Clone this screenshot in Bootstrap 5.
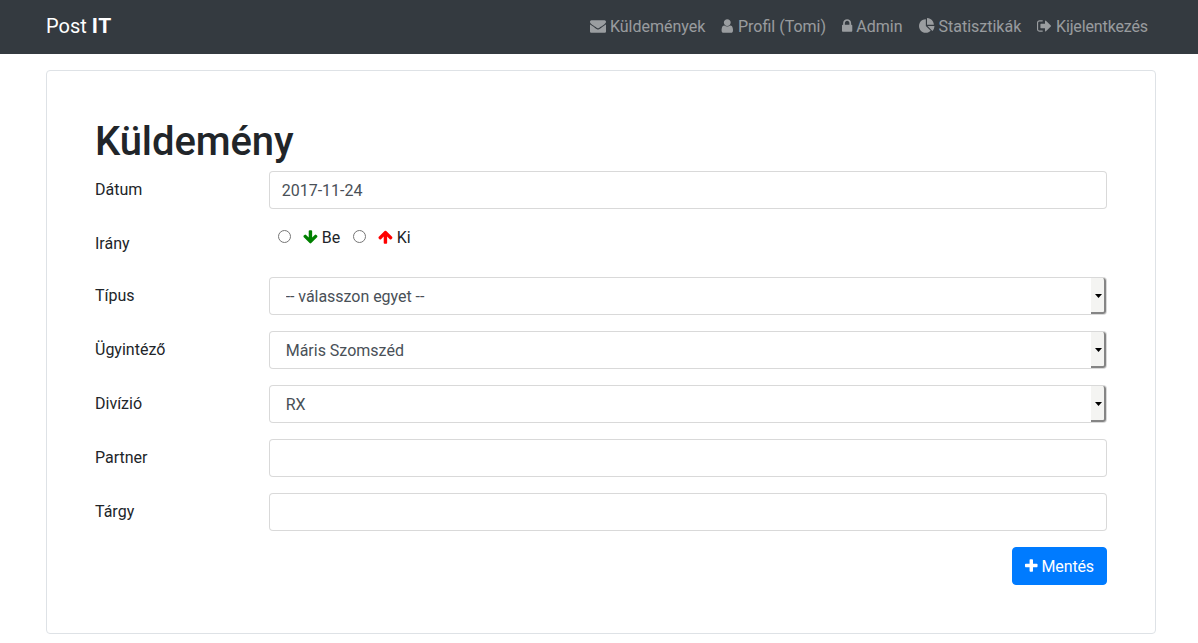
<!DOCTYPE html>
<html lang="hu">
<head>
<meta charset="utf-8">
<meta name="viewport" content="width=device-width, initial-scale=1">
<title>Post IT</title>
<link rel="stylesheet" href="https://cdn.jsdelivr.net/npm/bootstrap@5.3.0/dist/css/bootstrap.min.css">
<style>
body{font-family:Roboto,"Liberation Sans",sans-serif;color:#212529;overflow:hidden}
.page-width{width:1110px;margin-left:46px}
.topbar{background:#343a40;height:54px;padding:0}
.topbar .navbar-brand{font-size:20px;line-height:30px;padding:0;margin-top:-2px}
.topbar .navbar-brand b{font-size:21px;letter-spacing:.6px}
.topbar .nav-link{color:rgba(255,255,255,.5);line-height:24px;white-space:nowrap}
.topbar .logout{letter-spacing:-.13px}
.fa-icon{height:16px;fill:currentColor;vertical-align:-2.3px;overflow:visible}
.form-panel{border-color:rgba(0,0,0,.15);border-radius:4px}
h1{font-size:40px;line-height:42px;padding-top:2px;letter-spacing:-.1px}
.form-row{--bs-gutter-x:30px}
.col-form-label{padding-top:7px;padding-bottom:5px}
.form-control{border-color:rgba(0,0,0,.15);border-radius:4px;color:#495057;height:38px}
select.form-control{padding:7px 16px 5px}
#type{letter-spacing:-.04px}
.drop-button{right:1px;top:1px;width:15px;height:36px;padding-left:2px;padding-top:2px;background:#f4f4f2;border-right:2px solid #858585;border-bottom:2px solid #858585;border-radius:0 3px 3px 0;pointer-events:none}
.drop-button svg{width:7px;height:4px}
.choices{padding-left:9px}
.choices input{width:13px;height:13px;margin:5px 12px 0 0}
.choices label{line-height:24px;padding-top:1px;margin-right:12.4px;word-spacing:.3px}
.choices .fa-icon{vertical-align:-2px}
.btn-save{background:#007bff;border-color:#007bff;border-radius:4px;color:#fff;padding:7px 12px 5px;letter-spacing:-.13px}
</style>
</head>
<body>
<nav class="navbar topbar">
  <div class="page-width d-flex align-items-center justify-content-between">
    <a class="navbar-brand text-white" href="#">Post <b>IT</b></a>
    <ul class="nav flex-nowrap">
      <li><a class="nav-link p-2" href="#"><svg class="fa-icon" width="16" viewBox="0 0 1792 1792"><path d="M1792 710v794q0 66-47 113t-113 47h-1472q-66 0-113-47t-47-113v-794q44 49 101 87 362 246 497 345 57 42 92.500 65.500t94.500 48 110 24.500h2q51 0 110-24.500t94.500-48 92.500-65.500q170-123 498-345 57-39 100-87zm0-294q0 79-49 151t-122 123q-376 261-468 325-10 7-42.500 31t-54 38.500-52 32.500-57.500 27-50 9h-2q-23 0-50-9t-57.500-27-52-32.500-54-38.500-42.500-31q-91-64-262-182.500t-205-142.500q-62-42-117-115.500t-55-136.500q0-78 41.500-130t118.500-52h1472q65 0 112.500 47t47.500 113z"/></svg> Küldemények</a></li>
      <li><a class="nav-link p-2" href="#"><svg class="fa-icon" width="12.57" viewBox="192 0 1408 1792"><path d="M1536 1399q0 109-62.500 187t-150.500 78h-854q-88 0-150.500-78t-62.500-187q0-85 8.500-160.500t31.500-152 58.500-131 94-89 134.500-34.500q131 128 313 128t313-128q76 0 134.500 34.500t94 89 58.500 131 31.500 152 8.500 160.500zm-256-887q0 159-112.500 271.500t-271.500 112.500-271.500-112.500-112.500-271.500 112.500-271.500 271.500-112.500 271.500 112.500 112.500 271.500z"/></svg> Profil (Tomi)</a></li>
      <li><a class="nav-link p-2" href="#"><svg class="fa-icon" width="10.29" viewBox="320 0 1152 1792"><path d="M640 768h512v-192q0-106-75-181t-181-75-181 75-75 181v192zm832 96v576q0 40-28 68t-68 28h-960q-40 0-68-28t-28-68v-576q0-40 28-68t68-28h32v-192q0-184 132-316t316-132 316 132 132 316v192h32q40 0 68 28t28 68z"/></svg> Admin</a></li>
      <li><a class="nav-link p-2" href="#"><svg class="fa-icon" width="16" viewBox="0 0 1792 1792"><path d="M768 890l546 546q-106 108-247.500 168t-298.500 60q-209 0-385.500-103t-279.500-279.500-103-385.500 103-385.500 279.500-279.500 385.500-103v762zm187 6h773q0 157-60 298.500t-168 247.500zm709-128h-768v-768q209 0 385.500 103t279.500 279.500 103 385.500z"/></svg> Statisztikák</a></li>
      <li><a class="nav-link logout p-2" href="#"><svg class="fa-icon" width="14.86" viewBox="64 0 1664 1792"><path d="M704 1440q0 4 1 20t.5 26.500-3 23.500-10 19.500-20.500 6.500h-320q-119 0-203.500-84.500t-84.500-203.500v-704q0-119 84.500-203.500t203.500-84.500h320q13 0 22.500 9.500t9.500 22.500q0 4 1 20t.5 26.500-3 23.500-10 19.500-20.500 6.500h-320q-66 0-113 47t-47 113v704q0 66 47 113t113 47h312l11.500 1 11.500 3 8 5.500 7 9 2 13.500zm928-544q0 26-19 45l-544 544q-19 19-45 19t-45-19-19-45v-288h-448q-26 0-45-19t-19-45v-384q0-26 19-45t45-19h448v-288q0-26 19-45t45-19 45 19l544 544q19 19 19 45z"/></svg> Kijelentkezés</a></li>
    </ul>
  </div>
</nav>
<main class="page-width border form-panel mt-3 p-5">
  <h1 class="mb-2">Küldemény</h1>
  <form>
    <div class="row form-row mb-3">
      <label class="col-2 col-form-label" for="date">Dátum</label>
      <div class="col-10"><input class="form-control" id="date" type="text" value="2017-11-24"></div>
    </div>
    <div class="row form-row mb-3">
      <div class="col-2 col-form-label">Irány</div>
      <div class="col-10"><div class="choices d-flex align-items-start">
        <input type="radio" name="direction" id="in"><label for="in"><svg class="fa-icon" width="14.86" viewBox="64 0 1664 1792" style="color:green"><path d="M1675 832q0 53-37 90l-651 652q-39 37-91 37-53 0-90-37l-651-652q-38-36-38-90 0-53 38-91l74-75q39-37 91-37 53 0 90 37l294 294v-704q0-52 38-90t90-38h128q52 0 90 38t38 90v704l294-294q37-37 90-37 52 0 91 37l75 75q37 39 37 91z"/></svg> Be</label>
        <input type="radio" name="direction" id="out"><label for="out"><svg class="fa-icon" width="14.86" viewBox="64 0 1664 1792" style="color:red"><path d="M1675 971q0 51-37 90l-75 75q-38 38-91 38-54 0-90-38l-294-293v704q0 52-37.500 84.500t-90.500 32.500h-128q-53 0-90.500-32.500t-37.500-84.500v-704l-294 293q-36 38-90 38t-90-38l-75-75q-38-38-38-90 0-53 38-91l651-651q35-37 90-37 54 0 91 37l651 651q37 39 37 91z"/></svg> Ki</label>
      </div></div>
    </div>
    <div class="row form-row mb-3">
      <label class="col-2 col-form-label" for="type">Típus</label>
      <div class="col-10"><div class="position-relative">
        <select class="form-control" id="type"><option>-- válasszon egyet --</option></select>
        <span class="drop-button position-absolute d-flex align-items-center justify-content-center"><svg viewBox="0 0 7 4"><path d="M0 0h7L3.500 4z"/></svg></span>
      </div></div>
    </div>
    <div class="row form-row mb-3">
      <label class="col-2 col-form-label" for="clerk">Ügyintéző</label>
      <div class="col-10"><div class="position-relative">
        <select class="form-control" id="clerk"><option>Máris Szomszéd</option></select>
        <span class="drop-button position-absolute d-flex align-items-center justify-content-center"><svg viewBox="0 0 7 4"><path d="M0 0h7L3.500 4z"/></svg></span>
      </div></div>
    </div>
    <div class="row form-row mb-3">
      <label class="col-2 col-form-label" for="division">Divízió</label>
      <div class="col-10"><div class="position-relative">
        <select class="form-control" id="division"><option>RX</option></select>
        <span class="drop-button position-absolute d-flex align-items-center justify-content-center"><svg viewBox="0 0 7 4"><path d="M0 0h7L3.500 4z"/></svg></span>
      </div></div>
    </div>
    <div class="row form-row mb-3">
      <label class="col-2 col-form-label" for="partner">Partner</label>
      <div class="col-10"><input class="form-control" id="partner" type="text"></div>
    </div>
    <div class="row form-row mb-3">
      <label class="col-2 col-form-label" for="subject">Tárgy</label>
      <div class="col-10"><input class="form-control" id="subject" type="text"></div>
    </div>
    <div class="d-flex justify-content-end">
      <button class="btn btn-save" type="button"><svg class="fa-icon" width="12.57" viewBox="192 0 1408 1792"><path d="M1600 736v192q0 40-28 68t-68 28h-416v416q0 40-28 68t-68 28h-192q-40 0-68-28t-28-68v-416h-416q-40 0-68-28t-28-68v-192q0-40 28-68t68-28h416v-416q0-40 28-68t68-28h192q40 0 68 28t28 68v416h416q40 0 68 28t28 68z"/></svg> Mentés</button>
    </div>
  </form>
</main>
<script src="https://cdn.jsdelivr.net/npm/bootstrap@5.3.0/dist/js/bootstrap.bundle.min.js"></script>
</body>
</html>
